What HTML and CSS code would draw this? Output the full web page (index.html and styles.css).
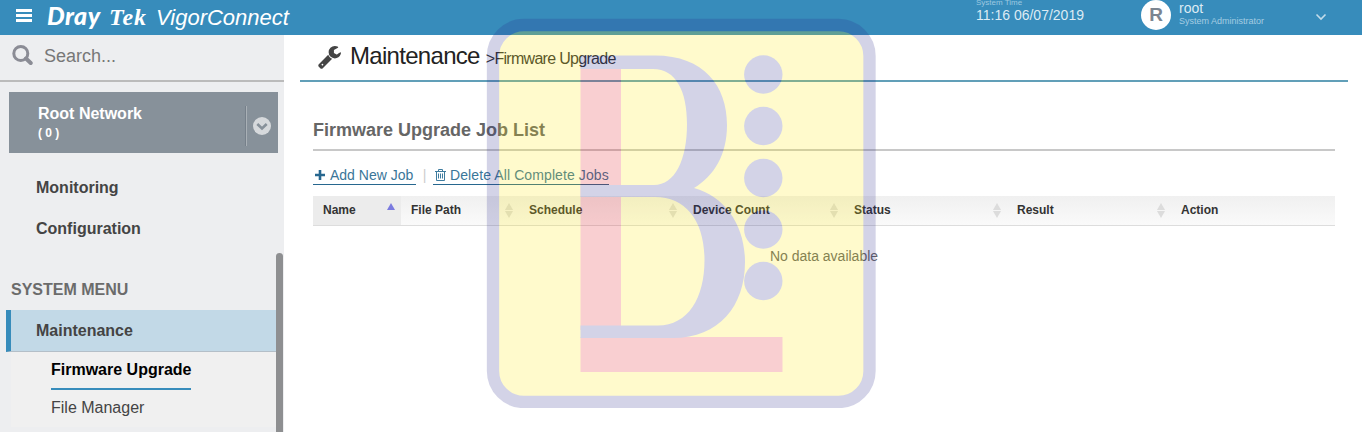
FILE: index.html
```
<!DOCTYPE html>
<html lang="en">
    <head>
        <meta charset="UTF-8" />
        <meta name="viewport" content="width=device-width, initial-scale=1.0" />
        <title>VigorConnect - Firmware Upgrade</title>
        <link rel="stylesheet" href="styles.css">
    </head>

    <body>
        <header class="topbar">
            <svg class="menu-icon" width="16" height="13" viewBox="0 0 16 13">
                <path d="M0 0h16v3H0zM0 5h16v3H0zM0 10h16v3H0z" fill="#fff" />
            </svg>
            <div class="logo"><span class="dray">Dray</span><span class="tek">Tek</span><span class="product">VigorConnect</span></div>
            <div class="time">
                <div class="label">System Time</div>
                <div class="value">11:16 06/07/2019</div>
            </div>
            <div class="avatar">R</div>
            <div class="user">
                <div class="name">root</div>
                <div class="role">System Administrator</div>
            </div>
            <svg class="user-arrow" width="12" height="8" viewBox="0 0 12 8">
                <path d="M1.5 1.5L6 6l4.500-4.500" fill="none" stroke="#c3dcea" stroke-width="1.600" />
            </svg>
        </header>

        <div class="container">
            <aside class="sidebar">
                <div class="search">
                    <svg width="21" height="21" viewBox="0 0 21 21">
                        <circle cx="8.800" cy="8.500" r="7" fill="none" stroke="#8b8c95" stroke-width="3" />
                        <path d="M14 13.500l4.700 4.500" stroke="#8b8c95" stroke-width="4" stroke-linecap="round" />
                    </svg>
                    <span>Search...</span>
                </div>
                <div class="network">
                    <div class="network-text">
                        <div class="network-name">Root Network</div>
                        <div class="network-count">( 0 )</div>
                    </div>
                    <div class="network-toggle">
                        <svg width="18" height="18" viewBox="0 0 18 18">
                            <circle cx="9" cy="9" r="9" fill="#d6d9dc" />
                            <path d="M4.300 7L9 11.500 13.700 7" fill="none" stroke="#87919a" stroke-width="2.600" />
                        </svg>
                    </div>
                </div>
                <ul class="menu">
                    <li>Monitoring</li>
                    <li>Configuration</li>
                </ul>
                <h3 class="menu-title">SYSTEM MENU</h3>
                <div class="system">
                    <div class="system-item">Maintenance</div>
                    <ul class="submenu">
                        <li><span class="active">Firmware Upgrade</span></li>
                        <li><span>File Manager</span></li>
                    </ul>
                </div>
                <div class="scrollbar"></div>
            </aside>

            <main class="content">
                <div class="page-title">
                    <svg width="23" height="23" viewBox="0 0 1664 1664">
                        <path d="M384 1344q0-26-19-45t-45-19-45 19-19 45 19 45 45 19 45-19 19-45zm644-420l-682 682q-37 37-90 37-52 0-91-37L59 1498q-38-36-38-90 0-53 38-91l681-681q39 98 114.500 173.500T1028 924zm634-435q0 39-23 106-47 134-164.500 217.500T1216 896q-185 0-316.500-131.500T768 448t131.500-316.500T1216 0q58 0 121.500 16.500T1445 63q16 11 16 28t-16 28l-293 169v224l193 107q5-3 79-48.500t135.500-81T1630 454q15 0 23.500 10t8.500 25z" fill="#444" />
                    </svg>
                    <h1>Maintenance</h1>
                    <span class="crumb">&gt;Firmware Upgrade</span>
                </div>

                <section class="jobs">
                    <h2>Firmware Upgrade Job List</h2>
                    <div class="actions">
                        <a class="add">
                            <svg width="10" height="10" viewBox="0 0 10 10">
                                <path d="M3.700 0h2.600v3.700H10v2.600H6.300V10H3.700V6.300H0V3.700h3.700z" fill="#27678f" />
                            </svg>
                            Add New Job
                        </a>
                        <span class="divider">|</span>
                        <a class="delete">
                            <svg width="11" height="12" viewBox="0 0 11 12">
                                <path d="M0 2.500h11M3.500 2.500v-2h4v2M1.500 2.500v9h8v-9M3.500 4.500v5M5.500 4.500v5M7.500 4.500v5" fill="none" stroke="#3f7c9f" />
                            </svg>
                            Delete All Complete Jobs
                        </a>
                    </div>
                    <table>
                        <colgroup>
                            <col class="c-name"><col class="c-path"><col class="c-schedule"><col class="c-count"><col class="c-status"><col class="c-result"><col class="c-action">
                        </colgroup>
                        <thead>
                            <tr>
                                <th class="sorted"><div>Name<i class="asc"></i></div></th>
                                <th><div>File Path<i class="sort"></i></div></th>
                                <th><div>Schedule<i class="sort"></i></div></th>
                                <th><div>Device Count<i class="sort"></i></div></th>
                                <th><div>Status<i class="sort"></i></div></th>
                                <th><div>Result<i class="sort"></i></div></th>
                                <th><div>Action</div></th>
                            </tr>
                        </thead>
                        <tbody>
                            <tr><td colspan="7">No data available</td></tr>
                        </tbody>
                    </table>
                </section>
            </main>
        </div>

        <!-- translucent emblem over the page -->
        <svg class="watermark" width="390" height="390" viewBox="486 18 390 390">
            <rect x="493" y="25" width="376.500" height="377" rx="31" fill="#ffeb05" stroke="#28288c" stroke-width="12.300" />
            <g fill="#e6141e">
                <rect x="580.500" y="60" width="40.500" height="270" />
                <rect x="580.500" y="337" width="202" height="35" />
            </g>
            <g fill="#28288c">
                <path fill-rule="evenodd" d="M580.500 55.500H655C704 55.500 727 86 727 125C727 155 714 176 694 188C726 197 745 226 745 262C745 306 719 338 673 338H580.500V325.500H658C688 325.500 704.500 298 704.500 260C704.500 221 686 197 655 197H580.500V185H654C675 185 687 160 687 124C687 91 676 69 653 69H580.500z" />
                <circle cx="763.300" cy="74.500" r="19.200" />
                <circle cx="763.300" cy="126" r="19.200" />
                <circle cx="763.300" cy="178" r="19.200" />
                <circle cx="763.300" cy="229.500" r="19.200" />
                <circle cx="763.300" cy="281" r="19.200" />
            </g>
        </svg>
    </body>
</html>
```

FILE: styles.css
```
* {
    margin: 0;
    padding: 0;
    box-sizing: border-box;
}

body {
    height: 432px;
    overflow: hidden;
    background: #fff;
    font-family: "Liberation Sans", Arial, sans-serif;
    color: #444;
}

li {
    list-style-type: none;
}

svg {
    display: block;
    flex: none;
}

.topbar {
    display: flex;
    height: 35px;
    background: #378cbb;
    color: #fff;
    white-space: nowrap;
}

.menu-icon {
    margin: 9px 15px 0 16px;
}

.logo {
    display: flex;
    align-items: baseline;
    width: 929px;
    height: 30px;
    line-height: 30px;
}

.logo .dray {
    width: 62px;
    font: italic 900 25px/30px Lato, sans-serif;
    letter-spacing: 0.5px;
}

.logo .tek {
    width: 47px;
    font: italic bold 24px/30px "Liberation Serif", serif;
    letter-spacing: 1px;
}

.logo .product {
    font-size: 22px;
    font-style: italic;
}

.time {
    width: 165px;
}

.time .label {
    height: 8px;
    margin-top: -2px;
    font-size: 8px;
    line-height: 9px;
    color: #9cc8e0;
}

.time .value {
    font-size: 14px;
    line-height: 18px;
    color: #dcebf4;
}

.avatar {
    width: 30px;
    height: 30px;
    border-radius: 50%;
    background: #fff;
    color: #7b8591;
    font-size: 19px;
    font-weight: bold;
    line-height: 30px;
    text-align: center;
}

.user {
    width: 144px;
    padding-left: 8px;
}

.user .name {
    font-size: 14px;
    line-height: 16px;
    color: #dcebf4;
}

.user .role {
    font-size: 9px;
    line-height: 11px;
    color: #a5cde2;
}

.user-arrow {
    margin-top: 13px;
}

.container {
    display: flex;
    height: 397px;
}

.sidebar {
    position: relative;
    width: 284px;
    flex: none;
    background: #edeef0;
    overflow: hidden;
}

.search {
    display: flex;
    height: 47px;
    padding: 10px 0 0 12px;
    border-bottom: 2px solid #bbb;
    font-size: 18px;
    line-height: 23px;
    color: #777;
}

.search span {
    margin-left: 11px;
}

.network {
    display: flex;
    align-items: center;
    width: 269px;
    height: 61px;
    margin: 10px 0 0 9px;
    background: #87919a;
    color: #fff;
    font-weight: bold;
}

.network-text {
    width: 237px;
    padding: 1px 0 0 29px;
}

.network-name {
    font-size: 16px;
    line-height: 20px;
}

.network-count {
    font-size: 12px;
    line-height: 18px;
}

.network-toggle {
    display: flex;
    align-items: center;
    height: 40px;
    margin-top: 7px;
    padding-left: 6px;
    border-left: 1px solid #a9b0b6;
    box-shadow: -1px 0 #76808a;
}

.menu {
    padding: 14px 0 0 36px;
}

.menu li {
    height: 41px;
    font-size: 16px;
    font-weight: bold;
    line-height: 41px;
}

.menu-title {
    height: 61px;
    padding: 20px 0 0 11px;
    font-size: 16px;
    line-height: 41px;
    color: #6b6b6b;
}

.system {
    width: 271px;
    margin-left: 6px;
}

.system-item {
    height: 42px;
    border-left: 5px solid #378cbb;
    border-bottom: 1px solid #b4bfc8;
    padding-left: 25px;
    background: #c2d9e7;
    font-size: 16px;
    font-weight: bold;
    line-height: 41px;
}

.submenu {
    height: 75px;
    margin-left: 5px;
    padding-left: 40px;
    background: #f0f0f0;
    font-size: 16px;
}

.submenu li {
    height: 38px;
}

.submenu span {
    display: inline-block;
    height: 38px;
    line-height: 35px;
}

.submenu .active {
    border-bottom: 2px solid #378cbb;
    color: #000;
    font-weight: bold;
}

/* overlays the menu rows */
.scrollbar {
    position: absolute;
    top: 218px;
    right: 1px;
    width: 7px;
    height: 200px;
    border-radius: 4px;
    background: #8e8f91;
}

.content {
    width: 1048px;
    margin-left: 16px;
}

.page-title {
    display: flex;
    align-items: baseline;
    height: 47px;
    padding-left: 18px;
    border-bottom: 2px solid #619fb8;
    line-height: 42px;
    white-space: nowrap;
}

.page-title svg {
    align-self: flex-start;
    margin-top: 11px;
}

.page-title h1 {
    margin-left: 9px;
    font-size: 24px;
    font-weight: normal;
    letter-spacing: -0.7px;
    color: #222;
}

.crumb {
    margin-left: 6px;
    font-size: 16px;
    letter-spacing: -0.7px;
    color: #333;
}

.jobs {
    width: 1022px;
    margin-left: 13px;
}

.jobs h2 {
    height: 69px;
    padding-top: 37px;
    border-bottom: 2px solid #c8c8c8;
    font-size: 18px;
    line-height: 22px;
    color: #666;
}

.actions {
    display: flex;
    height: 45px;
    padding-top: 15px;
    font-size: 14px;
    color: #3a7699;
    white-space: nowrap;
}

.actions a {
    display: flex;
    align-items: center;
    height: 19px;
    border-bottom: 1px solid #27678f;
}

.actions .add {
    width: 103px;
    padding-left: 2px;
    gap: 5px;
}

.actions .delete {
    width: 176px;
    padding-left: 2px;
    gap: 4px;
    letter-spacing: 0.1px;
}

.actions .divider {
    width: 17px;
    line-height: 18px;
    text-align: center;
    color: #ccc;
}

table {
    width: 1022px;
    table-layout: fixed;
    border-collapse: collapse;
}

.c-name {
    width: 88px;
}

.c-path {
    width: 118px;
}

.c-schedule, .c-result, .c-action {
    width: 164px;
}

.c-count {
    width: 161px;
}

.c-status {
    width: 163px;
}

thead {
    background: linear-gradient(#f0f0f0, #fafafa);
}

th {
    height: 29px;
    border-bottom: 1px solid #ddd;
    font-size: 12px;
    text-align: left;
    color: #333;
}

th.sorted {
    background: #ececec;
}

th div {
    display: flex;
    align-items: center;
    justify-content: space-between;
    padding: 0 6px 0 10px;
    white-space: nowrap;
}

.asc {
    margin-top: -7px;
    border: 4px solid transparent;
    border-top: 0;
    border-bottom: 7px solid #7b7bdf;
}

.sort {
    display: grid;
    gap: 1px;
}

.sort::before, .sort::after {
    content: "";
    border: 4px solid transparent;
}

.sort::before {
    border-top: 0;
    border-bottom: 7px solid #dcdcdc;
}

.sort::after {
    border-bottom: 0;
    border-top: 7px solid #dcdcdc;
}

td {
    height: 61px;
    font-size: 14px;
    text-align: center;
    color: #666;
}

.watermark {
    position: absolute;
    top: 18px;
    left: 486px;
    opacity: 0.2;
    pointer-events: none;
}
```
